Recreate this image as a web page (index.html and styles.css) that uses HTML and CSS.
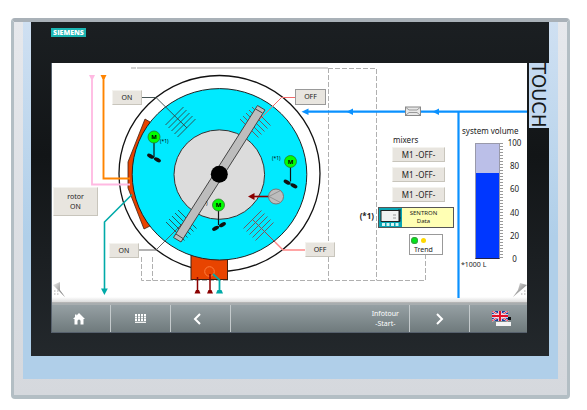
FILE: index.html
```html
<!DOCTYPE html>
<html lang="en">
<head>
  <meta charset="UTF-8">
  <meta name="viewport" content="width=device-width, initial-scale=1.0">
  <title>Rotor panel</title>
  <link rel="stylesheet" href="styles.css">
</head>
<body>
  <div class="device">
    <div class="plate">
      <div class="bezel">
        <div class="bezel-top">
          <span class="brand">SIEMENS</span>
        </div>
        <div class="bezel-middle">
          <main class="screen">
            <div class="mimic">
              <svg class="drawing" viewBox="52 63 475 240" width="475" height="240" aria-hidden="true">
                <defs>
                  <g id="comb">
                    <path d="M-15-3L3-21M-12 0L6-18M-9 3L9-15M-6 6L12-12M-3 9L15-9"/>
                  </g>
                  <g id="motor">
                    <path d="M0 5V20" stroke="#111" stroke-width="1.2"/>
                    <circle r="6" fill="#0f0" stroke="#2a7a2a" stroke-width=".8"/>
                  </g>
                  <g id="fan" fill="#111">
                    <ellipse cx="-3.4" cy="-1.8" rx="3.8" ry="1.9" transform="rotate(28 -3.4 -1.8)"/>
                    <ellipse cx="3.4" cy="1.8" rx="3.8" ry="1.9" transform="rotate(28 3.4 1.8)"/>
                  </g>
                  <linearGradient id="fold" x1="0" y1="0" x2="1" y2="1">
                    <stop offset="0" stop-color="#f4f4f4"/>
                    <stop offset="1" stop-color="#555"/>
                  </linearGradient>
                </defs>

                <!-- signal lines -->
                <path d="M131 68H136M137 68H328" stroke="#c4c4c4" stroke-width="1.6" fill="none"/>
                <path d="M328 68.500H376.500V280.500M328.500 68V280.500M141.500 257V280.500H425.500V255M152.500 257V280.500" stroke="#b0b0b0" stroke-dasharray="5 2" fill="none"/>

                <!-- tank -->
                <ellipse cx="219.500" cy="173.500" rx="100.500" ry="98" fill="#fff" stroke="#111" stroke-width="1.3"/>
                <path d="M145 119L128 162V188L144 229L150 226L160 174L150 122Z" fill="#e84400" stroke="#402010" stroke-width=".8"/>
                <rect x="191" y="254" width="36.500" height="25.500" fill="#e84400" stroke="#402010"/>
                <ellipse cx="219.500" cy="174.300" rx="87.300" ry="85.700" fill="#00eaff" stroke="#222"/>
                <ellipse cx="219.300" cy="174.600" rx="45.300" ry="44.700" fill="#dcdcdc" stroke="#333"/>

                <!-- sensors -->
                <g stroke="#344" stroke-width=".9" fill="none">
                  <path d="M142 97.500H156L187 128"/>
                  <use href="#comb" x="180.500" y="128"/>
                  <path d="M138 250H156L187 219" stroke="#555"/>
                  <path d="M166 222L184.500 240.500M169 219L187.500 237.500M172 216L190.500 234.500M175 213L193.500 231.500M178 210L196.500 228.500"/>
                </g>
                <g stroke="#7c4a50" stroke-width=".9" fill="none">
                  <path d="M240 119L258.500 137.500M243 116L261.500 134.500M246 113L264.500 131.500M249 110L267.500 128.500M252 107L270.500 125.500"/>
                  <use href="#comb" x="258.500" y="231.500"/>
                </g>
                <path d="M259 120L281.500 97.500H295" stroke="#f26a6a" fill="none"/>
                <path d="M253 220L275 242" stroke="#a04848" fill="none"/>
                <path d="M275 242L283 250H306" stroke="#f88" stroke-width="1.400" fill="none"/>

                <!-- rotor arm -->
                <path d="M257.500 105.500L265 110L181 242L173.500 237.500Z" fill="#bdbdbd" stroke="#444"/>
                <path d="M255.500 109L262.500 113M176 234L183 238.500" stroke="#444"/>
                <circle cx="219.300" cy="174.300" r="8.500" fill="#000"/>

                <!-- motors -->
                <use href="#motor" x="154" y="137"/>
                <use href="#fan" x="154" y="158"/>
                <use href="#motor" x="290.500" y="161.500"/>
                <use href="#fan" x="290.500" y="184"/>
                <use href="#motor" x="218.500" y="205"/>
                <use href="#fan" transform="translate(219 226.500) scale(-1 1)"/>
                <g class="motor-text">
                  <text x="154" y="139">M</text>
                  <text x="290.500" y="163.500">M</text>
                  <text x="218.500" y="207">M</text>
                </g>
                <g class="note-text">
                  <text x="160" y="143">(*1)</text>
                  <text x="272" y="160">(*1)</text>
                  <text x="206" y="205">)</text>
                </g>

                <!-- pump -->
                <path d="M253 196.500H269" stroke="#8b0000" stroke-width="1.600"/>
                <path d="M248 196.500L254.500 193V200Z" fill="#8b0000"/>
                <circle cx="276" cy="196.500" r="7.500" fill="#bdbdbd" stroke="#777"/>
                <path d="M280.500 190.500L269 196.500L280.500 202.500" fill="none" stroke="#888" stroke-width=".8"/>

                <!-- inlet pipes -->
                <path d="M92 77V184.500H130" stroke="#ffb9e2" stroke-width="1.800" fill="none"/>
                <path d="M89 75H95L93 79H91Z" fill="#ffb9e2"/>
                <path d="M103.500 77V178.500H130" stroke="#ff8400" stroke-width="1.900" fill="none"/>
                <path d="M100.500 75H106.500L104.500 79H102.500Z" fill="#ff8400"/>
                <path d="M132 194.500L104.500 222V289" stroke="#00aaa8" stroke-width="1.600" fill="none"/>
                <path d="M101 288.500H107.800L104.400 295Z" fill="#00aaa8"/>

                <!-- drain -->
                <circle cx="209.500" cy="271.500" r="4.800" fill="none" stroke="#ff7d3c"/>
                <path d="M197.500 277V292M210 274V292" stroke="#8b0000" stroke-width="1.500"/>
                <path d="M194.500 293.500L196 290H199L200.500 293.500ZM207 293.500L208.500 290H211.500L213 293.500Z" fill="#8b0000"/>
                <path d="M213 274L219.500 280V292" stroke="#00aaa8" stroke-width="1.800" fill="none"/>
                <path d="M216 293.500L217.500 290H221.500L223 293.500Z" fill="#00aaa8"/>

                <!-- water line -->
                <path d="M306 111.700H527M458.500 112V298" stroke="#0a91ff" stroke-width="2.200" fill="none"/>
                <path d="M301.500 111.700L308.500 108.500V115ZM346.500 111.700L353 108.500V115ZM432.500 111.700L439 108.500V115Z" fill="#0a91ff"/>
                <rect x="405.500" y="107" width="15" height="8.500" fill="#e8e8e8" stroke="#888"/>
                <path d="M406 107.500L409 110H417L420 107.500M406 115L409 112.500H417L420 115" fill="none" stroke="#999"/>

                <!-- page corners -->
                <path d="M53 285L60 282V290L65 297Z" fill="url(#fold)"/>
                <path d="M54 291H59M54 294H59" stroke="#aaa" stroke-dasharray="1.500 1.500"/>
                <path d="M527 285L520 283L518 290L513 297Z" fill="url(#fold)"/>
                <path d="M521 294H527M524 291H527" stroke="#aaa" stroke-dasharray="1.500 1.500"/>
              </svg>

              <div class="tank">
                <button type="button" class="key key-on-top">ON</button>
                <button type="button" class="key key-off-top">OFF</button>
                <button type="button" class="key key-rotor">rotor<br>ON</button>
                <button type="button" class="key key-on-bottom">ON</button>
                <button type="button" class="key key-off-bottom">OFF</button>
                <span class="sentron-note">(*1)</span>
              </div>

              <section class="mixers">
                <h2 class="label">mixers</h2>
                <div class="mixer-list">
                  <button type="button" class="key key-mixer">M1 -OFF-</button>
                  <button type="button" class="key key-mixer">M1 -OFF-</button>
                  <button type="button" class="key key-mixer">M1 -OFF-</button>
                </div>
                <button type="button" class="sentron">
                  <svg viewBox="0 0 23 19" width="23" height="19" aria-hidden="true">
                    <rect width="23" height="19" fill="#08a5b4"/>
                    <path d="M1 3H4M19 2H22M19 10H22" stroke="#044" stroke-width="1"/>
                    <rect x="1.500" y="2" width="20" height="12" rx="1" fill="#222"/>
                    <rect x="2.500" y="3" width="17" height="10" fill="#f2f2f2"/>
                    <path d="M14 7H17M14 10H17" stroke="#999"/>
                    <path d="M3 16.500H20" stroke="#d8f4f4" stroke-width="3" stroke-dasharray="3 1.500"/>
                  </svg>
                  <span class="sentron-text">SENTRON<br>Data</span>
                </button>
                <button type="button" class="trend">
                  <span class="lamps"><i class="lamp lamp-green"></i><i class="lamp lamp-yellow"></i></span>
                  <span class="trend-text">Trend</span>
                </button>
              </section>

              <section class="volume">
                <h2 class="label">system volume</h2>
                <div class="gauge">
                  <div class="gauge-bar">
                    <div class="gauge-fill" style="height: 75%"></div>
                  </div>
                  <div class="gauge-ticks"></div>
                  <div class="gauge-scale">
                    <span>100</span>
                    <span>80</span>
                    <span>60</span>
                    <span>40</span>
                    <span>20</span>
                    <span>0</span>
                  </div>
                </div>
                <p class="unit">*1000 L</p>
              </section>
            </div>

            <nav class="toolbar">
              <button type="button" class="tool tool-home" aria-label="Home">
                <svg viewBox="0 0 12 12" width="12" height="12"><path d="M6 0L12 6H10.500V11.500H7.500V8A1.500 1.500 0 0 0 4.500 8V11.500H1.500V6H0L2 4V1.500H3.500V2.500Z" fill="#fff"/></svg>
              </button>
              <button type="button" class="tool" aria-label="Keypad">
                <svg viewBox="0 0 11 9" width="11" height="9"><path d="M0 1H11M0 3.500H11M0 6H11" stroke="#fff" stroke-width="1.800" stroke-dasharray="2 1"/><path d="M0 8.300H11" stroke="#fff" stroke-width="1.200"/></svg>
              </button>
              <button type="button" class="tool tool-prev" aria-label="Back">
                <svg viewBox="0 0 8 12" width="8" height="12"><path d="M7 1L2 6L7 11" fill="none" stroke="#fff" stroke-width="2"/></svg>
              </button>
              <button type="button" class="tool tool-wide">Infotour<br>-Start-</button>
              <button type="button" class="tool" aria-label="Forward">
                <svg viewBox="0 0 8 12" width="8" height="12"><path d="M1 1L6 6L1 11" fill="none" stroke="#fff" stroke-width="2"/></svg>
              </button>
              <button type="button" class="tool tool-lang" aria-label="Language">
                <svg viewBox="0 0 19 16" width="19" height="16">
                  <rect x="4" y="11" width="15" height="4" fill="#f4f4f4"/>
                  <rect x="15" y="6" width="4" height="3" fill="#111"/>
                  <rect width="16" height="10" fill="#1c3f9c"/>
                  <path d="M0 0L16 10M16 0L0 10" stroke="#fff" stroke-width="2"/>
                  <path d="M0 0L16 10M16 0L0 10" stroke="#e0122b" stroke-width=".9"/>
                  <path d="M8 0V10M0 5H16" stroke="#fff" stroke-width="3.600"/>
                  <path d="M8 0V10M0 5H16" stroke="#e0122b" stroke-width="2.200"/>
                </svg>
              </button>
            </nav>
          </main>
          <aside class="side"><span class="touch">TOUCH</span></aside>
        </div>
      </div>
    </div>
  </div>
</body>
</html>
```

FILE: styles.css
```css
* {
  box-sizing: border-box;
}

body {
  margin: 0;
  padding: 18px 17px 12px 11px;
  background: #fff;
  font-family: "Noto Sans", "Open Sans", sans-serif;
  color: #222;
}

button {
  margin: 0;
  padding: 0;
  border: 0;
  font-family: inherit;
  color: inherit;
  cursor: pointer;
}

/* housing */
.device {
  border: 3px solid #b3bec4;
  border-top: 4px solid #a9b1b8;
  border-bottom-width: 4px;
  border-radius: 4px;
  padding: 0 9px 16px;
  background: linear-gradient(#e6e8ec, #d5d8dd);
}

.plate {
  padding: 0 9px 23px 8px;
  background: linear-gradient(#cfe0f2, #b0cfe9 60%);
}

.bezel {
  padding: 0 0 23px 20px;
  background: linear-gradient(#1b1f22, #121517 40%, #23282c);
}

.bezel-top {
  height: 41px;
  padding-top: 6px;
}

.brand {
  display: block;
  width: 35px;
  height: 9px;
  background: #1bb5b3;
  color: #fff;
  font: 800 7px/9px "Open Sans", sans-serif;
  text-align: center;
}

.bezel-middle {
  display: flex;
}

.screen {
  flex: 1;
  min-width: 0;
  border-left: 1px solid #56606c;
  border-bottom: 1px solid #56606c;
  background: #fff;
}

.side {
  flex: 0 0 22px;
  padding-left: 2px;
}

.touch {
  display: block;
  width: 20px;
  height: 65px;
  background: #c3d9f1;
  color: #16191b;
  font: 20px/20px "DejaVu Sans Condensed", "Liberation Sans", sans-serif;
  text-align: center;
  writing-mode: vertical-rl;
}

/* process picture */
.mimic {
  position: relative;
  display: flex;
  height: 240px;
  overflow: hidden;
  background: linear-gradient(#fff 234px, #dcdcdc 239px, #8d8d8d 240px);
}

.drawing {
  position: absolute;
  top: 0;
  left: 0;
}

.motor-text {
  font-size: 6px;
  font-weight: 700;
  text-anchor: middle;
}

.note-text {
  font-size: 5px;
}

.tank {
  position: relative;
  flex: 0 0 326px;
}

.key {
  border: 1px solid;
  border-color: #f4f3ef #c8c5bc #c8c5bc #f4f3ef;
  background: #e8e5df;
  font-size: 7px;
  line-height: 10px;
}

.tank .key {
  position: absolute;
  width: 30px;
  height: 15px;
}

.tank .key-on-top {
  left: 60px;
  top: 27px;
}

.tank .key-off-top {
  left: 243px;
  top: 26px;
  width: 31px;
  height: 16px;
  border-color: #999;
}

.tank .key-rotor {
  left: 1px;
  top: 124px;
  width: 45px;
  height: 29px;
}

.tank .key-on-bottom {
  left: 57px;
  top: 180px;
}

.tank .key-off-bottom {
  left: 253px;
  top: 179px;
}

.sentron-note {
  position: absolute;
  right: 4px;
  top: 147px;
  font-size: 8px;
  line-height: 12px;
  font-weight: 700;
}

.label {
  margin: 0;
  font-size: 8px;
  line-height: 12px;
  font-weight: 400;
  white-space: nowrap;
}

.mixers {
  position: relative;
  display: flex;
  flex-direction: column;
  align-items: flex-start;
  flex: 0 0 84px;
  padding-top: 71px;
}

.mixers .label {
  margin-left: 15px;
}

.mixer-list {
  display: flex;
  flex-direction: column;
  gap: 5px;
  margin: 1px 0 5px 14px;
}

.key-mixer {
  width: 53px;
  height: 15px;
  font-size: 8px;
}

.sentron {
  display: flex;
  width: 76px;
  height: 21px;
  border: 1px solid #555;
  background: #ffffb4;
  font-size: 6px;
  line-height: 8px;
}

.sentron-text {
  flex: 1;
  padding: 1px 8px 0 0;
}

.trend {
  width: 34px;
  height: 21px;
  margin: 6px 0 0 31px;
  border: 1px solid #999;
  background: #fff;
  font-size: 7px;
  line-height: 9px;
  text-align: left;
}

.trend-text {
  display: block;
  padding-left: 4px;
}

.lamps {
  display: flex;
  align-items: center;
  gap: 3px;
  height: 9px;
  padding-left: 1px;
}

.lamp {
  width: 7px;
  height: 7px;
  border-radius: 50%;
}

.lamp-green {
  background: #00e818;
  outline: 1px solid #4a8a4a;
  outline-offset: -1px;
}

.lamp-yellow {
  width: 5px;
  height: 5px;
  background: #ffd800;
}

.volume {
  position: relative;
  flex: 1;
  padding-top: 62px;
}

.gauge {
  display: flex;
  height: 116px;
  margin: 6px 0 0 13px;
}

.gauge-bar {
  display: flex;
  align-items: flex-end;
  width: 25px;
  border: 1px solid #99a;
  border-bottom-color: #224;
  background: #bbbfe8;
}

.gauge-fill {
  width: 100%;
  background: #0037ff;
}

.gauge-ticks {
  width: 3px;
  background: repeating-linear-gradient(#999 0 1px, #fff 1px 3px);
}

.gauge-scale {
  display: flex;
  flex-direction: column;
  justify-content: space-between;
  width: 23px;
  margin: -6px 0;
  font-size: 8px;
  line-height: 12px;
  text-align: center;
}

.unit {
  margin: 0;
  font-size: 7px;
  line-height: 12px;
  text-indent: -1px;
}

/* bottom toolbar */
.toolbar {
  display: flex;
  height: 29px;
  border-top: 2px solid #a8adaf;
  background: linear-gradient(#96a0a4, #6f7a7c);
}

.tool {
  display: flex;
  align-items: center;
  justify-content: center;
  flex: 0 0 60px;
  border-right: 1px solid #c4cacc;
  background: none;
  color: #fff;
  font-size: 7px;
  line-height: 10px;
}

.tool-home {
  flex-basis: 59px;
  padding-right: 4px;
}

.tool-prev {
  padding-right: 8px;
}

.tool-wide {
  flex: 1;
  justify-content: flex-end;
  padding-right: 10px;
}

.tool-lang {
  flex-basis: 57px;
  padding-left: 6px;
  border-right: 0;
}
```
